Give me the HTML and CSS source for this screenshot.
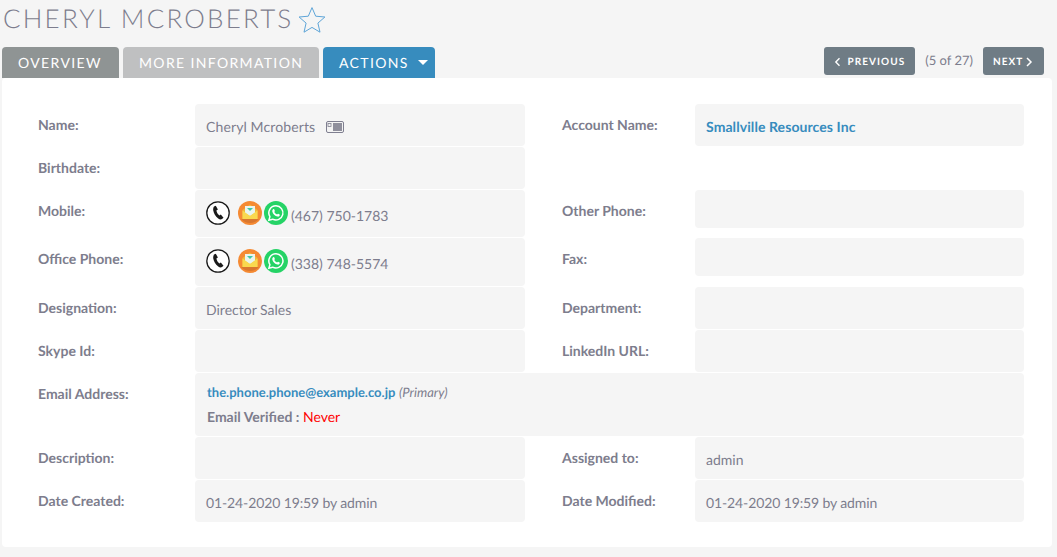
FILE: index.html
```html
<!DOCTYPE html>
<html lang="en">
<head>
<meta charset="utf-8">
<title>Cheryl Mcroberts</title>
<link rel="stylesheet" href="styles.css">
</head>
<body>
<header class="title-row">
  <h1 class="title">Cheryl Mcroberts</h1>
  <svg class="star" viewBox="0 0 28 28" width="28" height="28"><path d="M14 1.600l3.700 8.600 9.200.8-7 6.100 2.100 9.100-8-4.800-8 4.800 2.100-9.100-7-6.100 9.200-.8z" fill="none" stroke="#5ea5d8" stroke-width="1"/></svg>
</header>
<nav class="toolbar">
  <div class="tabs">
    <a class="tab tab-active">Overview</a>
    <a class="tab tab-muted">More Information</a>
    <a class="tab tab-actions">Actions <span class="caret"></span></a>
  </div>
  <div class="pager">
    <a class="page-btn page-prev"><svg viewBox="0 0 8 10" width="8" height="10"><path d="M6 1L2 5l4 4" fill="none" stroke="#fff" stroke-width="1.500"/></svg>Previous</a>
    <span class="page-count">(5 of 27)</span>
    <a class="page-btn page-next">Next<svg viewBox="0 0 8 10" width="8" height="10"><path d="M2 1l4 4-4 4" fill="none" stroke="#fff" stroke-width="1.500"/></svg></a>
  </div>
</nav>
<main class="panel">
  <div class="grid">
    <div class="label">Name:</div>
    <div class="value name">Cheryl Mcroberts
      <svg class="vcard" viewBox="0 0 18 12" width="18" height="12"><rect x=".5" y=".5" width="17" height="11" rx="1.500" fill="#f3f3f3" stroke="#7f7f90"/><rect x="7" y="2" width="9" height="8" fill="#8f8f9c"/><rect x="2" y="2.500" width="3" height="3" fill="none" stroke="#7f7f90" stroke-width=".8"/></svg>
    </div>
    <div class="label col2">Account Name:</div>
    <div class="value"><a class="link account">Smallville Resources Inc</a></div>

    <div class="label">Birthdate:</div>
    <div class="value"></div>
    <div class="blank"></div>

    <div class="label">Mobile:</div>
    <div class="value phone">
      <svg class="ic call" viewBox="0 0 24 24" width="24" height="24"><circle cx="12" cy="12" r="11.200" fill="#fff" stroke="#1a1a1a" stroke-width="1.300"/><path d="M8 5.500l1.800-.8 2.100 3.700-1.500 1.200c.3 1.900 1.300 3.500 2.900 4.800l1.500-.9 2.700 3.300-1.500 1.300c-1.200.6-2.600.3-3.800-.6-2.800-2.100-4.500-5-5-8.200-.1-1.500.1-2.800.8-3.800z" fill="#1a1a1a"/></svg>
      <svg class="ic sms" viewBox="0 0 24 24" width="24" height="24"><circle cx="12" cy="12" r="12" fill="#f58a33"/><path d="M3 18h18a12 12 0 0 1-18 0z" fill="#d9772f"/><path d="M12 3.500l7.500 5.500v9h-15V9z" fill="#f0b93a"/><path d="M7 5h10v7l-5 3-5-3z" fill="#e9f4ee"/><path d="M9 7h6l-3 3z" fill="#3fc7a8"/><path d="M4.500 9.500L12 15l7.500-5.500V18h-15z" fill="#f9d94f"/></svg>
      <svg class="ic wa" viewBox="0 0 24 24" width="24" height="24"><circle cx="12" cy="12" r="12" fill="#25d366"/><path d="M12 4.800a7.100 7.100 0 0 0-6.100 10.800l-1 3.600 3.700-1A7.100 7.100 0 1 0 12 4.800z" fill="none" stroke="#fff" stroke-width="1.500"/><path d="M9.500 8c.4 0 .6.100.8.600l.5 1.200c.1.300 0 .5-.5 1.100.6 1.200 1.500 2 2.800 2.600.5-.6.800-.9 1.100-.7l1.300.7c.4.200.4.400.3.800-.3 1-1.200 1.500-2.200 1.300-2.600-.5-4.900-2.800-5.300-5.200-.1-1 .3-2 1.200-2.400z" fill="#fff"/></svg>
      <span class="num">(467) 750-1783</span>
    </div>
    <div class="label col2">Other Phone:</div>
    <div class="value short"></div>

    <div class="label">Office Phone:</div>
    <div class="value phone">
      <svg class="ic call" viewBox="0 0 24 24" width="24" height="24"><circle cx="12" cy="12" r="11.200" fill="#fff" stroke="#1a1a1a" stroke-width="1.300"/><path d="M8 5.500l1.800-.8 2.100 3.700-1.500 1.200c.3 1.900 1.300 3.500 2.900 4.800l1.500-.9 2.700 3.300-1.500 1.300c-1.200.6-2.600.3-3.800-.6-2.800-2.100-4.500-5-5-8.200-.1-1.500.1-2.800.8-3.800z" fill="#1a1a1a"/></svg>
      <svg class="ic sms" viewBox="0 0 24 24" width="24" height="24"><circle cx="12" cy="12" r="12" fill="#f58a33"/><path d="M3 18h18a12 12 0 0 1-18 0z" fill="#d9772f"/><path d="M12 3.500l7.500 5.500v9h-15V9z" fill="#f0b93a"/><path d="M7 5h10v7l-5 3-5-3z" fill="#e9f4ee"/><path d="M9 7h6l-3 3z" fill="#3fc7a8"/><path d="M4.500 9.500L12 15l7.500-5.500V18h-15z" fill="#f9d94f"/></svg>
      <svg class="ic wa" viewBox="0 0 24 24" width="24" height="24"><circle cx="12" cy="12" r="12" fill="#25d366"/><path d="M12 4.800a7.100 7.100 0 0 0-6.100 10.800l-1 3.600 3.700-1A7.100 7.100 0 1 0 12 4.800z" fill="none" stroke="#fff" stroke-width="1.500"/><path d="M9.500 8c.4 0 .6.100.8.600l.5 1.200c.1.300 0 .5-.5 1.100.6 1.200 1.500 2 2.800 2.600.5-.6.800-.9 1.100-.7l1.300.7c.4.200.4.400.3.800-.3 1-1.200 1.500-2.200 1.300-2.600-.5-4.900-2.800-5.300-5.200-.1-1 .3-2 1.200-2.400z" fill="#fff"/></svg>
      <span class="num">(338) 748-5574</span>
    </div>
    <div class="label col2">Fax:</div>
    <div class="value short"></div>

    <div class="label">Designation:</div>
    <div class="value">Director Sales</div>
    <div class="label col2">Department:</div>
    <div class="value"></div>

    <div class="label">Skype Id:</div>
    <div class="value"></div>
    <div class="label col2">LinkedIn URL:</div>
    <div class="value"></div>

    <div class="label">Email Address:</div>
    <div class="value wide">
      <div class="email-line"><a class="link email">the.phone.phone@example.co.jp</a> <em class="primary">(Primary)</em></div>
      <div class="verified"><strong>Email Verified :</strong> <span class="never">Never</span></div>
    </div>

    <div class="label">Description:</div>
    <div class="value"></div>
    <div class="label col2">Assigned to:</div>
    <div class="value">admin</div>

    <div class="label">Date Created:</div>
    <div class="value date">01-24-2020 19:59 by admin</div>
    <div class="label col2">Date Modified:</div>
    <div class="value date">01-24-2020 19:59 by admin</div>
  </div>
</main>
</body>
</html>
```
FILE: styles.css
```css
* { box-sizing: border-box; }
html, body { margin: 0; height: 100%; }
body {
  background: #f5f5f5;
  font-family: Lato, sans-serif;
  font-size: 14px;
  color: #7d7d8d;
  overflow: hidden;
  text-rendering: geometricPrecision;
}
.title-row {
  display: flex;
  align-items: flex-start;
  height: 47px;
  padding: 0 0 0 3px;
}
.title {
  margin: 0;
  font-size: 26px;
  font-weight: 300;
  letter-spacing: 2.2px;
  text-transform: uppercase;
  line-height: 36px;
  color: #7d7d8d;
}
.star { margin: 6px 0 0 5px; }
.toolbar {
  display: flex;
  justify-content: space-between;
  height: 31px;
  padding: 0 13px 0 2px;
}
.tabs { display: flex; gap: 4px; }
.tab {
  display: flex;
  align-items: center;
  height: 31px;
  padding: 0 16px;
  border-radius: 4px 4px 0 0;
  color: #fff;
  font-size: 14px;
  letter-spacing: 1.35px;
  text-transform: uppercase;
  white-space: nowrap;
}
.tab-active { background: #8f9494; width: 117px; }
.tab-muted { background: #bfc0c1; width: 196px; }
.tab-actions { background: #378cbe; width: 112px; white-space: pre; }
.caret {
  display: inline-block;
  margin-left: 4px;
  border-left: 5px solid transparent;
  border-right: 5px solid transparent;
  border-top: 5px solid #fff;
}
.pager { display: flex; align-items: flex-start; }
.page-btn {
  display: flex;
  align-items: center;
  height: 28px;
  padding: 1px 10px 0;
  background: #6f7c85;
  border-radius: 3px;
  color: #fff;
  font-size: 10px;
  font-weight: 700;
  letter-spacing: 1.05px;
  text-transform: uppercase;
}
.page-prev { gap: 6px; width: 91px; }
.page-next { gap: 2px; width: 61px; }
.page-count { margin: 0 10px; line-height: 26px; font-size: 13px; color: #7d7d8d; }
.panel {
  width: 1050px;
  height: 469px;
  margin-left: 2px;
  padding: 26px 0 0 36px;
  background: #fff;
  border-radius: 4px;
}
.grid {
  display: grid;
  grid-template-columns: 157px 330px 37px 133px 329px;
  grid-template-rows: 42px 42px 47px 48px 42px 42px 63px 42px 42px;
  row-gap: 1px;
}
.label { padding-top: 12px; font-weight: 700; font-size: 14px; line-height: 17px; color: #7d7d8d; }
.col2 { grid-column: 4; }
.blank { grid-column: 3 / span 3; }
.value {
  display: block;
  background: #f5f5f5;
  border-radius: 4px;
  padding: 14px 11px 0;
  line-height: 18px;
  font-size: 14px;
}
.name { letter-spacing: .12px; }
.date { letter-spacing: -.12px; }
.short { height: 38px; }
.phone { display: flex; align-items: flex-start; padding-top: 11px; }
.ic { flex: none; }
.sms { margin-left: 8px; }
.wa { margin-left: 2px; }
.num { margin: 6px 0 0 3px; }
.vcard { margin-left: 7px; vertical-align: -1px; }
.link { color: #378cbe; font-weight: 700; }
.account { letter-spacing: .08px; }
.email { font-size: 13px; }
.wide { grid-column: 2 / span 4; padding: 10px 12px 0; }
.email-line { line-height: 18px; }
.primary { font-size: 13px; }
.verified { margin-top: 7px; line-height: 18px; }
.verified strong { font-weight: 700; }
.never { color: #f00; }
```
